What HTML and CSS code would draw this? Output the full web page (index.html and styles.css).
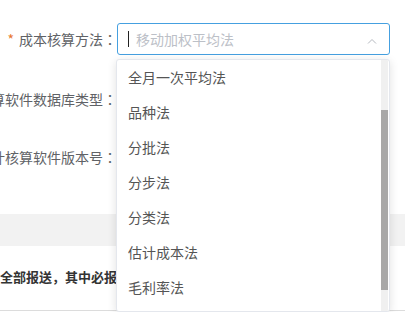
FILE: index.html
```html
<!DOCTYPE html>
<html lang="zh-CN">
<head>
  <meta charset="UTF-8">
  <meta name="viewport" content="width=device-width, initial-scale=1.0">
  <title>成本核算方法</title>
  <link rel="stylesheet" href="styles.css">
</head>
<body>

<div class="page">
  <!-- 表单 -->
  <div class="form">
    <div class="form-row">
      <div class="form-label"><span class="required">*</span>成本核算方法<span class="punct">：</span></div>
      <div class="select-box">
        <span class="caret"></span>
        <span class="placeholder">移动加权平均法</span>
        <svg class="arrow" width="10" height="6" viewBox="0 0 10 6">
          <path d="M1 5.5 L5 1.5 L9 5.5" fill="none" stroke="#b4b8bf" stroke-width="1"/>
        </svg>
      </div>
    </div>
    <div class="form-row row-2">
      <div class="form-label">会计核算软件数据库类型<span class="punct">：</span></div>
    </div>
    <div class="form-row row-3">
      <div class="form-label">会计核算软件版本号<span class="punct">：</span></div>
    </div>
  </div>

  <!-- 分隔区 -->
  <div class="section-band"></div>

  <div class="notice">全部报送<span class="punct">，</span>其中必报表为必填项</div>
</div>

<!-- 下拉菜单 -->
<div class="dropdown">
  <ul class="dropdown-list">
    <li>全月一次平均法</li>
    <li>品种法</li>
    <li>分批法</li>
    <li>分步法</li>
    <li>分类法</li>
    <li>估计成本法</li>
    <li>毛利率法</li>
  </ul>
  <div class="scrollbar">
    <div class="scrollbar-thumb"></div>
  </div>
</div>

</body>
</html>
```

FILE: styles.css
```css
body {
  margin: 0;
  width: 405px;
  height: 312px;
  overflow: hidden;
  background-color: #ffffff;
  font-family: "Noto Sans CJK SC", "Noto Sans", sans-serif;
  font-size: 14px;
  color: #606266;
  position: relative;
}

.page {
  padding-top: 23px;
}

/* 全角标点居中 */
.punct {
  font-family: "Noto Sans CJK JP", sans-serif;
}

/* 表单 */
.form-row {
  display: flex;
  align-items: center;
  height: 32px;
}

.row-2 {
  margin-top: 28px;
}

.row-3 {
  margin-top: 26px;
}

.form-label {
  width: 117px;
  flex-shrink: 0;
  display: flex;
  justify-content: flex-end;
  white-space: nowrap;
  line-height: 32px;
}

.required {
  color: #e8772e;
  margin-right: 5px;
}

.select-box {
  width: 273px;
  height: 32px;
  box-sizing: border-box;
  border: 1px solid #45a0e0;
  border-radius: 3px;
  display: flex;
  align-items: center;
  padding-left: 10px;
  padding-right: 12px;
}

.caret {
  width: 1px;
  height: 16px;
  background-color: #222;
  margin-right: 7px;
}

.placeholder {
  color: #bcc0c7;
  flex: 1;
}

.arrow {
  margin-top: 3px;
}

/* 分隔区 */
.section-band {
  margin-top: 41px;
  height: 32px;
  background-color: #f2f2f2;
}

.notice {
  margin-top: 21px;
  white-space: nowrap;
  font-weight: bold;
  color: #333;
  font-size: 13px;
  line-height: 20px;
  padding-bottom: 23px;
  border-bottom: 1px solid #dcdcdc;
}

/* 下拉菜单 */
.dropdown {
  position: absolute;
  left: 116px;
  top: 59px;
  width: 274px;
  height: 253px;
  box-sizing: border-box;
  background-color: #ffffff;
  border: 1px solid #e4e7ed;
  border-radius: 3px;
  box-shadow: 0 2px 10px rgba(0, 0, 0, 0.12);
  display: flex;
  overflow: hidden;
}

.dropdown-list {
  flex: 1;
  list-style: none;
  margin: 0;
  padding: 0;
}

.dropdown-list li {
  height: 35px;
  line-height: 35px;
  padding-left: 11px;
  color: #555;
  white-space: nowrap;
}

.scrollbar {
  width: 7px;
  margin-right: 1px;
  background-color: #f0f0f0;
  padding-top: 50px;
  box-sizing: border-box;
}

.scrollbar-thumb {
  height: 180px;
  background-color: #a8a8a8;
}
```
